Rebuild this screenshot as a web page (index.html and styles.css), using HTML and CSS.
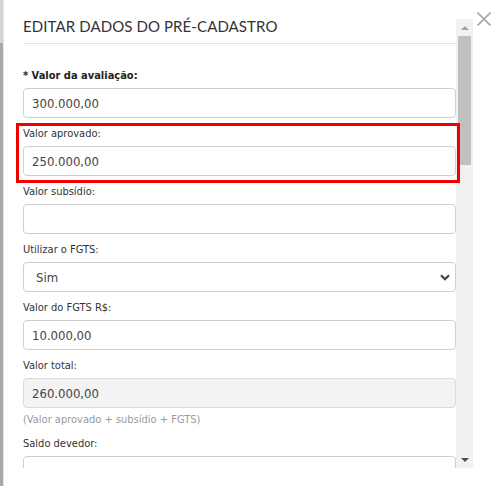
FILE: index.html
```html
<!DOCTYPE html>
<html lang="pt-BR">
<head>
<meta charset="utf-8">
<title>Editar dados do pré-cadastro</title>
<link rel="stylesheet" href="styles.css">
</head>
<body>
<div class="backdrop"></div>
<div class="modal">
  <div class="panel">
    <div class="content">
      <h1 class="title">EDITAR DADOS DO PRÉ-CADASTRO</h1>
      <hr class="divider">
      <div class="group">
        <label class="label label-strong">* Valor da avaliação:</label>
        <input class="field" type="text" value="300.000,00">
      </div>
      <div class="group group-highlight">
        <label class="label">Valor aprovado:</label>
        <input class="field" type="text" value="250.000,00">
      </div>
      <div class="group">
        <label class="label">Valor subsídio:</label>
        <input class="field" type="text" value="">
      </div>
      <div class="group">
        <label class="label">Utilizar o FGTS:</label>
        <div class="select-wrap">
          <select class="field select">
            <option>Sim</option>
            <option>Não</option>
          </select>
          <svg class="chevron" width="10" height="7" viewBox="0 0 10 7"><path d="M1 1.2 L5 5.2 L9 1.2" fill="none" stroke="#444" stroke-width="2.2"/></svg>
        </div>
      </div>
      <div class="group">
        <label class="label">Valor do FGTS R$:</label>
        <input class="field" type="text" value="10.000,00">
      </div>
      <div class="group group-tight">
        <label class="label">Valor total:</label>
        <input class="field field-disabled" type="text" value="260.000,00" disabled>
        <p class="help">(Valor aprovado + subsídio + FGTS)</p>
      </div>
      <div class="group">
        <label class="label">Saldo devedor:</label>
        <input class="field" type="text" value="">
      </div>
    </div>
    <div class="scrollbar">
      <div class="sb-btn"><span class="arrow-up"></span></div>
      <div class="sb-thumb"></div>
      <div class="sb-track"></div>
      <div class="sb-btn"><span class="arrow-down"></span></div>
    </div>
  </div>
  <div class="close">
    <svg width="14" height="14" viewBox="0 0 14 14"><path d="M0.5 0.5 L13.5 13.5 M13.5 0.5 L0.5 13.5" stroke="#a8a8a8" stroke-width="1.6" fill="none"/></svg>
  </div>
</div>
</body>
</html>
```

FILE: styles.css
```css
html, body {
  margin: 0;
  padding: 0;
  background: #fff;
}
body {
  display: flex;
  height: 486px;
  overflow: hidden;
  font-family: "DejaVu Sans Condensed", "Liberation Sans", sans-serif;
}
.backdrop {
  width: 3px;
  flex: none;
  border-right: 1px solid #e6e6e6;
  background: linear-gradient(#d3d3d3 0, #d3d3d3 43px, #a9a9a9 43px, #a9a9a9 100%);
}
.modal {
  flex: 1;
  display: flex;
  align-items: flex-start;
  background: #fff;
}
.panel {
  width: 469px;
  height: 449px;
  margin-top: 19px;
  display: flex;
  flex: none;
  clip-path: inset(-30px -30px 0 -30px);
}
.content {
  flex: 1;
  min-width: 0;
  padding-left: 19px;
}
.title {
  margin: 0;
  font-family: Lato, "Open Sans", sans-serif;
  font-weight: 400;
  font-size: 15px;
  letter-spacing: 0.1px;
  line-height: 14px;
  color: #333;
  white-space: nowrap;
}
.divider {
  margin: 10px 0 25px;
  border: 0;
  border-top: 1px solid #e3e3e3;
  height: 0;
}
.group {
  margin-bottom: 9px;
}
.group-tight {
  margin-bottom: 0;
}
.group-highlight {
  position: relative;
}
.group-highlight::after {
  content: "";
  position: absolute;
  left: -7px;
  right: -4px;
  top: -4px;
  bottom: -7px;
  border: 3px solid #f20000;
  pointer-events: none;
}
.label {
  display: block;
  font-size: 11px;
  line-height: 14px;
  margin-bottom: 5px;
  color: #333;
}
.label-strong {
  font-weight: 700;
  color: #222;
}
.field {
  display: block;
  box-sizing: border-box;
  width: 100%;
  height: 30px;
  margin: 0;
  padding: 0 8px;
  border: 1px solid #cfcfcf;
  border-radius: 4px;
  background: #fff;
  font-family: inherit;
  font-size: 13px;
  color: #444;
  outline: none;
}
.field-disabled {
  background: #f3f3f3;
  border-color: #dadada;
  color: #444;
}
.select-wrap {
  position: relative;
}
.select {
  appearance: none;
  -webkit-appearance: none;
  padding-left: 12px;
}
.chevron {
  position: absolute;
  right: 6px;
  top: 12px;
  pointer-events: none;
}
.help {
  margin: 5px 0 10px;
  font-size: 11px;
  line-height: 14px;
  color: #9a9a9a;
}
.scrollbar {
  width: 17px;
  flex: none;
  display: flex;
  flex-direction: column;
  background: #f1f1f1;
}
.sb-btn {
  height: 17px;
  flex: none;
  display: flex;
  align-items: center;
  justify-content: center;
}
.arrow-up {
  width: 0;
  height: 0;
  border-left: 4px solid transparent;
  border-right: 4px solid transparent;
  border-bottom: 4px solid #a3a3a3;
}
.arrow-down {
  width: 0;
  height: 0;
  border-left: 4px solid transparent;
  border-right: 4px solid transparent;
  border-top: 4px solid #505050;
}
.sb-thumb {
  height: 129px;
  margin: 0 2px;
  flex: none;
  background: #c1c1c1;
}
.sb-track {
  flex: 1;
}
.close {
  margin-left: 4px;
  padding-top: 12px;
  line-height: 0;
}
```
